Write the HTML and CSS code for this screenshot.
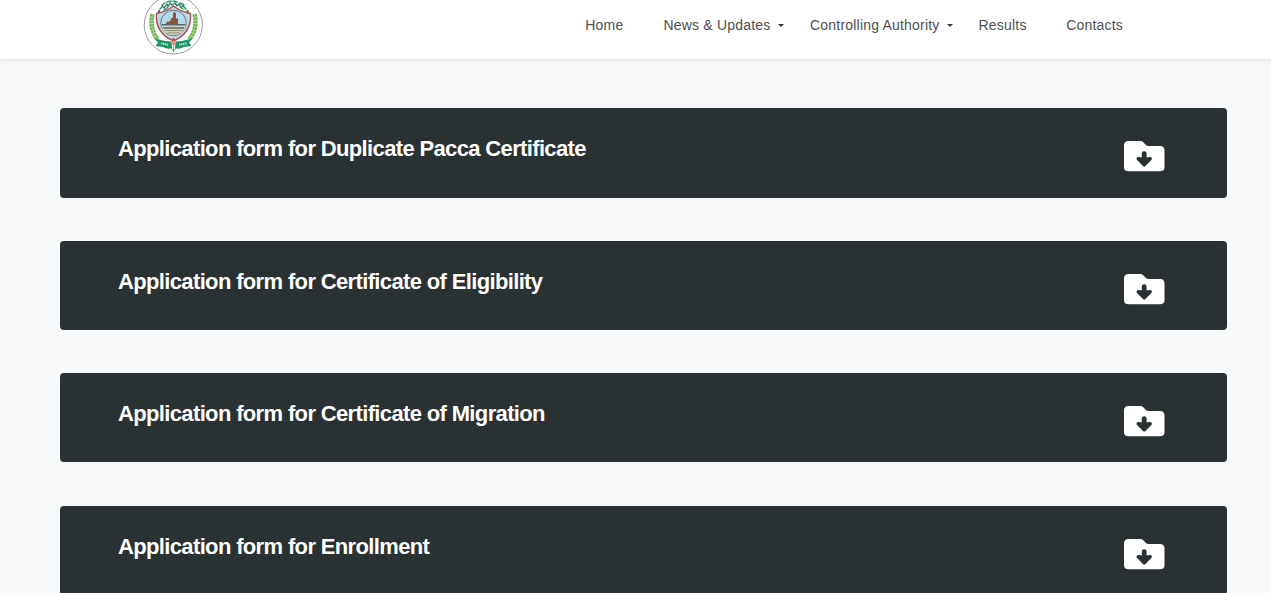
FILE: index.html
```html
<!DOCTYPE html>
<html lang="en">
<head>
<meta charset="utf-8">
<title>Application Forms</title>
<link rel="stylesheet" href="styles.css">
</head>
<body>
<svg class="sprite" aria-hidden="true">
  <symbol id="folder" viewBox="0 0 41 31">
    <path fill="#fff" d="M4.5 0H16.5Q18 0 19 1L22.2 4.3Q23 5 24.2 5H36Q40.5 5 40.5 9.5V26Q40.5 30.3 36 30.3H4.5Q0 30.3 0 26V4.5Q0 0 4.5 0Z"/>
    <path fill="none" stroke="#293133" stroke-width="4.8" stroke-linecap="round" d="M20.2 12.6V20"/>
    <path fill="#293133" stroke="#293133" stroke-width="3.6" stroke-linecap="round" stroke-linejoin="round" d="M14.3 17.8L20.2 23.6L26.1 17.8L20.2 18.6Z"/>
  </symbol>
</svg>
<header class="header">
  <a class="logo" href="#">
    <svg viewBox="0 0 60 60" width="60" height="60">
      <circle cx="30.3" cy="30" r="29.1" fill="#fff" stroke="#8d9493" stroke-width=".9"/>
      <g fill="none" stroke="#2f9068" stroke-width="1.5" stroke-linecap="round" stroke-linejoin="round">
        <path d="M17 14l3-3 1 2 3-4 1 3 2-4 2 2 3-2 2 3 2-2 2 3 2-1 3 3M19 10l3-2M24 7l4-1M30 6l4 1M37 8l4 2M21 15l3-2M37 12l3 2"/>
      </g>
      <path d="M15.5 15.500l1.500 2.500M17 15.500l-2 2M44 15.500l1.500 2.500M45.500 15.500l-2 2" stroke="#333" stroke-width="1.2"/>
      <g fill="none" stroke="#65b04d" stroke-width="4.4" stroke-dasharray="2.8 .5">
        <path d="M9.500 19Q6 34 15 44.500M51.500 19Q55 34 46 44.500"/>
      </g>
      <g fill="none" stroke="#a4d46d" stroke-width="1">
        <path d="M9.500 19Q6 34 15 44.500M51.500 19Q55 34 46 44.500"/>
      </g>
      <path d="M13.500 18.500Q23 17 30.500 11Q38 17 47.500 18.500Q49 38 30.500 46Q12 38 13.500 18.500Z" fill="#b9d9e7" stroke="#a84e50" stroke-width="1.400"/>
      <circle cx="30.500" cy="28" r="12.800" fill="#b5d9ec" stroke="#67757b" stroke-width="1"/>
      <path d="M18.500 29h24q0 11-12 11t-12-11" fill="#d8d2b8"/>
      <path d="M23 29l1-2.500h3l1-3 2-1v-4l1.500-2 1.500 2v5h2v6z" fill="#8a563a"/>
      <path d="M18.500 29.800h24M20 33h21" stroke="#526a70" stroke-width="1.400"/>
      <path d="M21 35.500h19M24 38h13" stroke="#888d73" stroke-width="1"/>
      <path d="M11.500 43.500Q20 46 28.500 46.500L29 53Q25 55 20 52L12.500 51L15 47.500Z" fill="#1f9364"/>
      <path d="M49.500 43.500Q41 46 32.500 46.500L32 53Q36 55 41 52L48.500 51L46 47.500Z" fill="#1f9364"/>
      <path d="M18 48.300l7 1.500M36 49.800l8-1.500" stroke="#c5e2cf" stroke-width="1.800" stroke-dasharray="1.500 .5"/>
      <path d="M29.500 43h2v7h-2z" fill="#cc3f30"/>
      <path d="M30.500 45v12" stroke="#b3a442" stroke-width="1"/>
      <path d="M28 53l2.500 3 2.500-3" stroke="#65b04d" fill="none"/>
    </svg>
  </a>
  <nav class="nav">
    <a class="home" href="#">Home</a>
    <a class="news" href="#">News &amp; Updates<i class="caret"></i></a>
    <a class="authority" href="#">Controlling Authority<i class="caret"></i></a>
    <a class="results" href="#">Results</a>
    <a class="contacts" href="#">Contacts</a>
  </nav>
</header>
<main class="forms">
  <a class="card" href="#"><h2>Application form for Duplicate Pacca Certificate</h2><svg class="icon"><use href="#folder"/></svg></a>
  <a class="card" href="#"><h2>Application form for Certificate of Eligibility</h2><svg class="icon"><use href="#folder"/></svg></a>
  <a class="card" href="#"><h2>Application form for Certificate of Migration</h2><svg class="icon"><use href="#folder"/></svg></a>
  <a class="card" href="#"><h2>Application form for Enrollment</h2><svg class="icon"><use href="#folder"/></svg></a>
</main>
</body>
</html>
```

FILE: styles.css
```css
* { box-sizing: border-box; }
body { margin: 0; height: 593px; overflow: hidden; background: #f8f9fb; font-family: "Liberation Sans", Arial, sans-serif; }
a { color: inherit; text-decoration: none; }
.sprite { display: none; }
.header { display: flex; height: 59px; background: #fff; box-shadow: 0 1px 4px rgba(0,0,0,.1); padding: 0 148px 0 143px; justify-content: space-between; align-items: flex-start; }
.logo { height: 60px; margin-top: -5px; }
.logo svg { display: block; }
.nav { display: flex; padding-top: 16px; font-size: 14px; line-height: 18px; letter-spacing: .2px; color: #505050; white-space: nowrap; }
.news { margin-left: 40px; }
.authority { margin-left: 26.5px; }
.results { margin-left: 26px; }
.contacts { margin-left: 39.5px; }
.caret { display: inline-block; margin-left: 7px; vertical-align: 3px; border: 3px solid transparent; border-top-color: #333; border-bottom: 0; }
.forms { display: flex; flex-direction: column; gap: 43.1px; padding: 49.2px 44px 0 60px; }
.card { display: flex; flex: none; height: 89.35px; justify-content: space-between; align-items: flex-start; padding: 26px 62px 0 58px; border-radius: 4px; background: #293133; color: #fff; }
.card h2 { margin: 0; padding-top: 1px; font-size: 22px; line-height: 28px; font-weight: 700; letter-spacing: -.645px; white-space: nowrap; }
.icon { width: 41px; height: 31px; margin-top: 7px; }
```
